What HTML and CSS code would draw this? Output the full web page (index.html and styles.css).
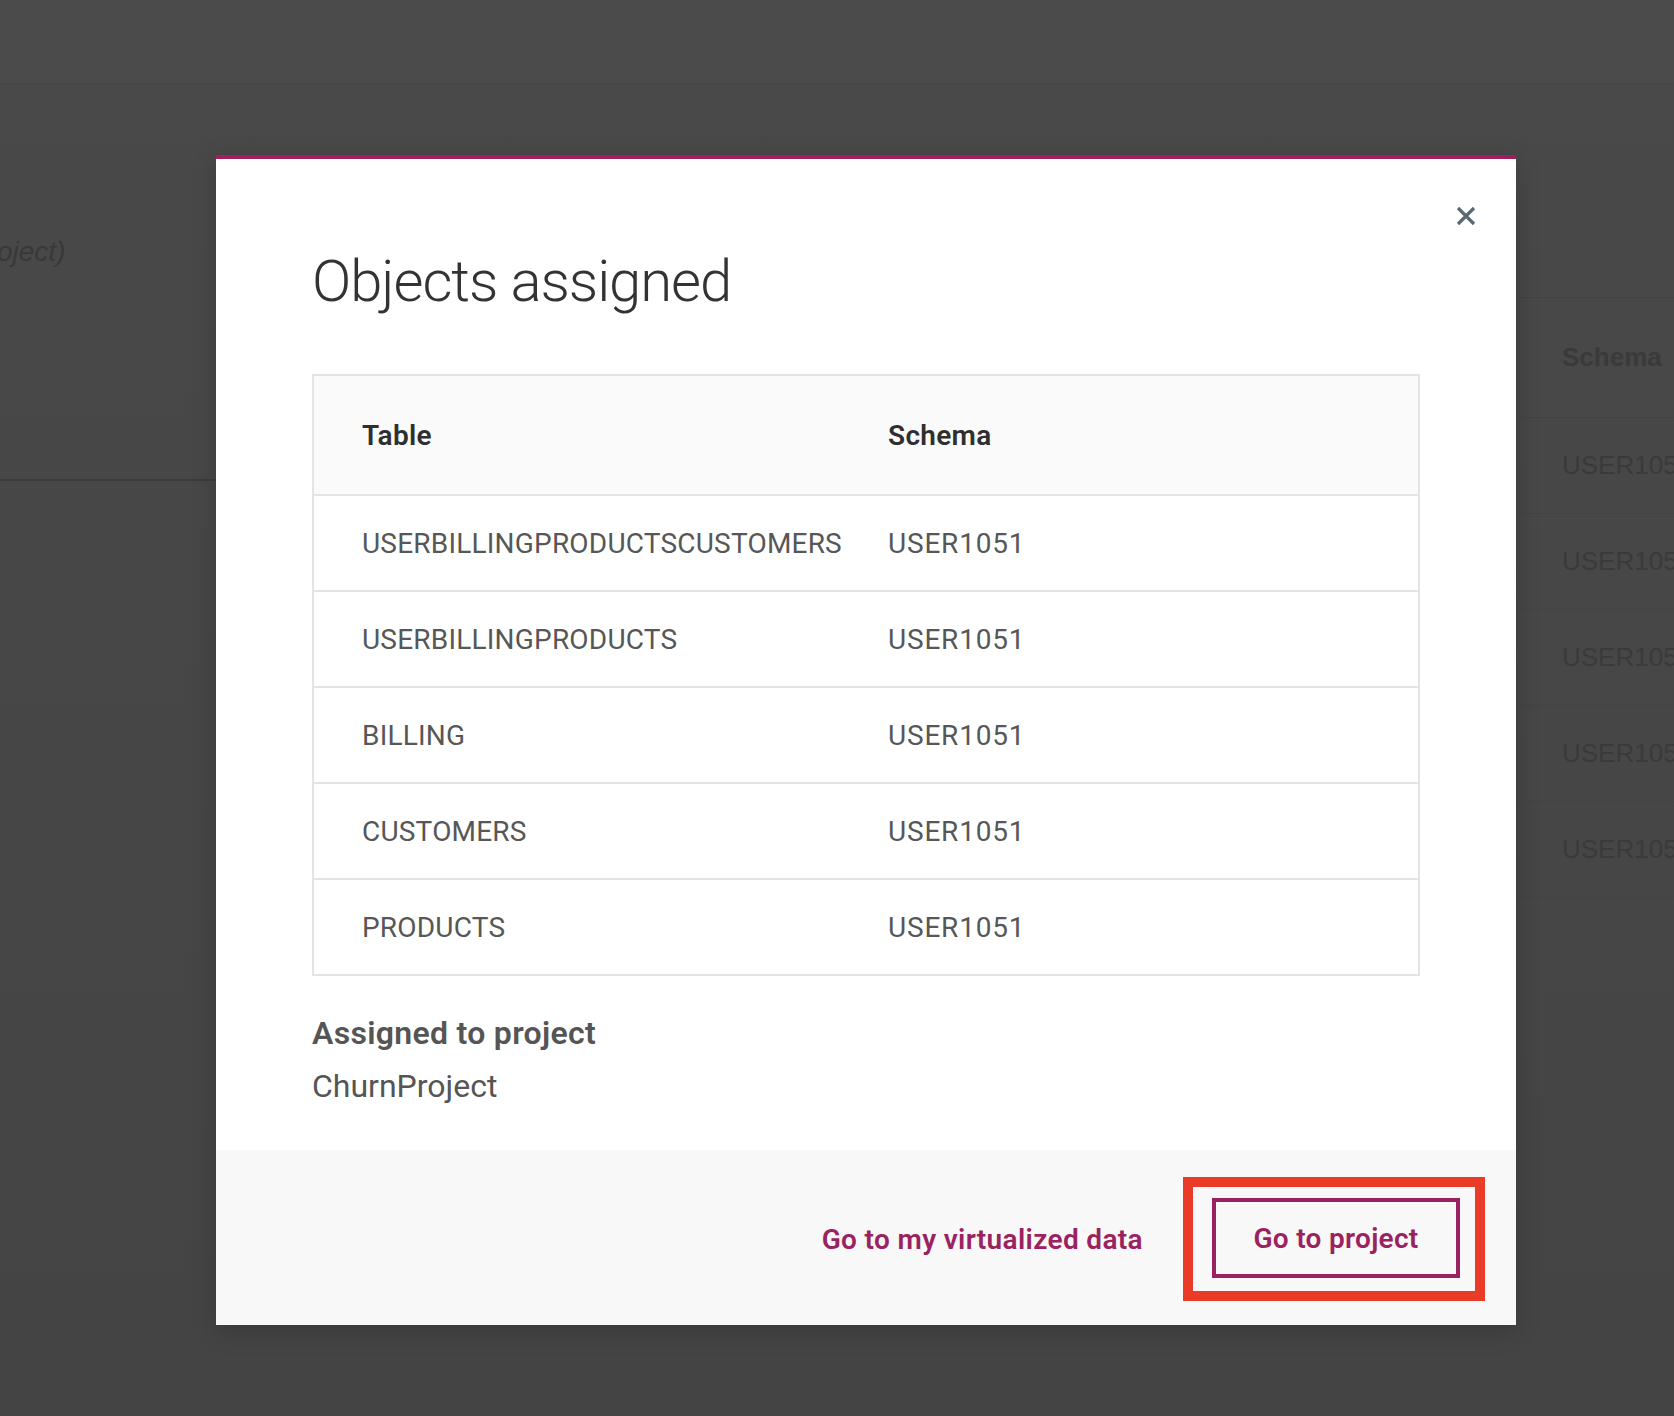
FILE: index.html
```html
<!DOCTYPE html>
<html lang="en">
<head>
<meta charset="utf-8">
<title>Objects assigned</title>
<link rel="stylesheet" href="styles.css">
</head>
<body>
  <div class="page">
    <header class="topbar"></header>
    <div class="content">
      <div class="left-pane">
        <p class="crumb">oject)</p>
        <div class="rule"></div>
      </div>
      <div class="bg-table">
        <div class="bg-head">Schema</div>
        <div class="bg-row">USER1051</div>
        <div class="bg-row">USER1051</div>
        <div class="bg-row">USER1051</div>
        <div class="bg-row">USER1051</div>
        <div class="bg-row">USER1051</div>
      </div>
    </div>
  </div>

  <div class="overlay">
    <div class="modal" role="dialog" aria-label="Objects assigned">
      <button class="close" aria-label="Close">
        <svg width="20" height="20" viewBox="0 0 20 20" aria-hidden="true">
          <path d="M2 2 L18 18 M18 2 L2 18" stroke="#5a6872" stroke-width="3.2" fill="none"/>
        </svg>
      </button>
      <div class="modal-body">
        <h2 class="title">Objects assigned</h2>
        <div class="tbl">
          <div class="tbl-head">
            <div class="cell">Table</div>
            <div class="cell">Schema</div>
          </div>
          <div class="tbl-row">
            <div class="cell">USERBILLINGPRODUCTSCUSTOMERS</div>
            <div class="cell">USER1051</div>
          </div>
          <div class="tbl-row">
            <div class="cell">USERBILLINGPRODUCTS</div>
            <div class="cell">USER1051</div>
          </div>
          <div class="tbl-row">
            <div class="cell">BILLING</div>
            <div class="cell">USER1051</div>
          </div>
          <div class="tbl-row">
            <div class="cell">CUSTOMERS</div>
            <div class="cell">USER1051</div>
          </div>
          <div class="tbl-row">
            <div class="cell">PRODUCTS</div>
            <div class="cell">USER1051</div>
          </div>
        </div>
        <p class="label">Assigned to project</p>
        <p class="value">ChurnProject</p>
      </div>
      <div class="footer">
        <button class="ghost">Go to my virtualized data</button>
        <span class="highlight">
          <button class="outline">Go to project</button>
        </span>
      </div>
    </div>
  </div>
</body>
</html>
```

FILE: styles.css
```css
* { box-sizing: border-box; }

html, body {
  margin: 0;
  padding: 0;
}

body {
  width: 1674px;
  height: 1416px;
  overflow: hidden;
  background: linear-gradient(#494949, #444444);
  font-family: Roboto, "Liberation Sans", sans-serif;
  position: relative;
}

/* ---------- dimmed page behind ---------- */
.page {
  width: 1674px;
  height: 1416px;
}

.topbar {
  height: 84px;
  background: #4b4b4b;
  border-bottom: 1px solid #464646;
}

.content {
  display: grid;
  grid-template-columns: 1516px 1fr;
}

.left-pane {
  padding-top: 151px;
}

.crumb {
  margin: 0 0 0 -3px;
  font-family: "Liberation Sans", sans-serif;
  font-style: italic;
  font-size: 28px;
  line-height: 34px;
  color: #393939;
}

.rule {
  margin-top: 210px;
  height: 2px;
  background: #3c3c3c;
}

.bg-table {
  margin-top: 213px;
  border-top: 1px solid #434343;
  font-family: "Liberation Sans", sans-serif;
  font-size: 26px;
  color: #3a3a3a;
  white-space: nowrap;
}

.bg-head {
  height: 120px;
  display: flex;
  align-items: center;
  padding-left: 46px;
  font-weight: 700;
  border-bottom: 1px solid #434343;
}

.bg-row {
  height: 96px;
  display: flex;
  align-items: center;
  padding-left: 46px;
  border-bottom: 1px solid #434343;
}

/* ---------- modal ---------- */
.overlay {
  position: absolute;
  inset: 0;
  padding: 155px 0 0 216px;
}

.modal {
  position: relative;
  width: 1300px;
  height: 1170px;
  background: #ffffff;
  border-top: 4px solid #a11f5d;
  display: flex;
  flex-direction: column;
  box-shadow: 0 6px 24px rgba(0, 0, 0, 0.18);
}

.close {
  position: absolute;
  top: 47px;
  right: 40px;
  width: 20px;
  height: 20px;
  padding: 0;
  border: 0;
  background: none;
  display: block;
}

.close svg { display: block; }

.modal-body {
  padding: 0 96px;
}

.title {
  margin: 93px 0 0;
  font-weight: 300;
  font-size: 58px;
  line-height: 58px;
  letter-spacing: -1.05px;
  color: #333333;
}

.tbl {
  margin-top: 64px;
  border: 2px solid #e4e4e4;
  border-bottom: 0;
  font-size: 28px;
}

.tbl-head,
.tbl-row {
  display: grid;
  grid-template-columns: 526px 1fr;
  align-items: center;
  border-bottom: 2px solid #e4e4e4;
}

.tbl-head {
  height: 120px;
  background: #fafafa;
  font-weight: 600;
  color: #2f2f2f;
  letter-spacing: 0.3px;
}

.tbl-row {
  height: 96px;
  color: #575757;
  letter-spacing: 0.2px;
}

.tbl-row .cell + .cell {
  letter-spacing: 0.8px;
}

.cell {
  padding-left: 48px;
  white-space: nowrap;
}

.label {
  margin: 37px 0 0;
  font-size: 32px;
  line-height: 40px;
  font-weight: 600;
  letter-spacing: 0.3px;
  color: #555555;
}

.value {
  margin: 13px 0 0;
  font-size: 32px;
  line-height: 40px;
  color: #555555;
}

/* ---------- footer ---------- */
.footer {
  margin-top: auto;
  height: 175px;
  background: #f8f8f8;
  display: flex;
  justify-content: flex-end;
  align-items: center;
  padding-right: 31px;
}

.ghost {
  margin: 3px 40px 0 0;
  padding: 0;
  border: 0;
  background: none;
  font-family: Roboto, "Liberation Sans", sans-serif;
  font-size: 28px;
  font-weight: 600;
  letter-spacing: 0.35px;
  color: #9b2260;
}

.highlight {
  margin-top: 3px;
  border: 10px solid #e93b27;
  padding: 11px 15px 13px 19px;
  display: block;
}

.outline {
  display: flex;
  align-items: center;
  justify-content: center;
  width: 248px;
  height: 80px;
  padding: 0;
  border: 4px solid #9b2260;
  background: transparent;
  font-family: Roboto, "Liberation Sans", sans-serif;
  font-size: 28px;
  font-weight: 600;
  letter-spacing: 0.3px;
  color: #9b2260;
}
```
